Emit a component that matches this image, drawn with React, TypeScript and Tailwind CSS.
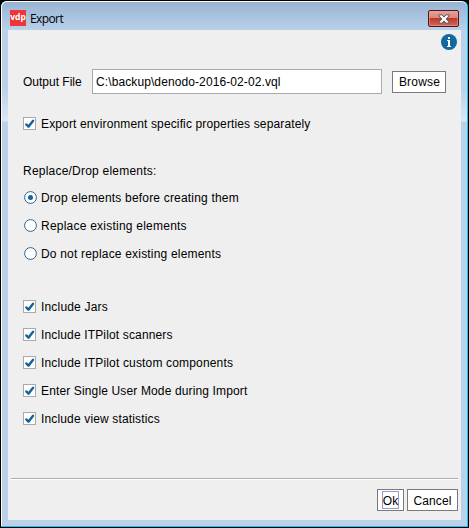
import React from 'react';

function Check({ label, spacing }: { label: string; spacing: string }) {
  return (
    <label className="flex h-7 items-center">
      <span className="flex h-[13px] w-[13px] shrink-0 items-center justify-center border border-[#aaaaaa] bg-white">
        <svg width="11" height="11" viewBox="0 0 11 11">
          <path d="M1.200 5.500H3.200L4.400 6.800 8.300 1.800H10.200V3.200L5.300 9.800H3.800L1.200 7Z" fill="#14649b" />
        </svg>
      </span>
      <span className={'mt-px ml-[5px] whitespace-nowrap ' + spacing}>{label}</span>
    </label>
  );
}

function Radio({ label, on, spacing }: { label: string; on?: boolean; spacing: string }) {
  return (
    <label className="flex h-7 items-center">
      <svg className="ml-px shrink-0" width="13" height="13" viewBox="0 0 13 13">
        <circle cx="6.5" cy="6.5" r="5.9" fill="#fff" stroke="#30648f" strokeWidth="1" />
        {on && <circle cx="6.5" cy="6.5" r="2.5" fill="#14649b" />}
      </svg>
      <span className={'mt-px ml-1 whitespace-nowrap ' + spacing}>{label}</span>
    </label>
  );
}

export default function App() {
  return (
    <div className="h-[528px] w-[469px] overflow-hidden bg-black font-['Liberation_Sans',Arial,sans-serif] text-[12px] leading-[14px] text-black">
      <div className="flex h-full flex-col rounded-t-[7px] border border-black bg-[#17c5ed] pr-px pb-px">
        <div className="flex min-h-0 flex-1 flex-col rounded-t-[6px] border-t border-l border-white bg-[linear-gradient(180deg,#99b4d2_0px,#a9c2df_14px,#b9d1ea_28px,#b9d1ea_85px,#dae7f5_119px,#b9d1ea_120px)] pr-[6px] pb-[6px] pl-[6px]">
          <header className="flex h-7 shrink-0 items-start">
            <span className="mt-2 ml-[2px] flex h-4 w-4 items-center justify-center bg-[#ee3537] pb-px font-['Open_Sans',sans-serif] text-[8.5px] leading-none font-bold text-white">vdp</span>
            <span className="mt-[9px] ml-[4px] font-['Open_Sans',sans-serif] text-[12px] leading-[16px] tracking-[-0.6px]">Export</span>
            <button className="mt-2 mr-[2px] ml-auto flex h-[17px] w-[31px] items-center justify-center rounded-[2px] border border-[#501622] bg-[linear-gradient(#e7a399_0%,#d88478_48%,#bd3a26_50%,#d46a55_100%)] shadow-[inset_0_0_0_1px_#e9a49a88]">
              <svg width="12" height="10" viewBox="0 0 12 10">
                <path d="M1 .8H4L6 3 8 .8H11V2L8.2 5 11 8V9.2H8L6 7 4 9.2H1V8L3.8 5 1 2Z" fill="#f5f5f5" stroke="#5b5863" strokeWidth="1" />
              </svg>
            </button>
          </header>
          <main className="flex min-h-0 flex-1 flex-col bg-[#efefef]">
            <div className="flex h-[39px] justify-end pt-1 pr-[4px]">
              <svg width="16" height="16" viewBox="0 0 16 16">
                <circle cx="8" cy="8" r="8" fill="#13689d" />
                <path d="M7 3h2v2H7zM6 6h3v6h1v1H6v-1h1V7H6z" fill="#fff" />
              </svg>
            </div>
            <div className="flex h-[25px] items-center pl-[15px]">
              <span className="w-[69px] whitespace-nowrap">Output File</span>
              <div className="flex h-[25px] w-[290px] items-center border border-[#aaaaaa] bg-white pl-[3px] tracking-[0.1px]">C:\backup\denodo-2016-02-02.vql</div>
              <button className="ml-[10px] h-[22px] w-[54px] border border-[#7a7a7a] bg-white pl-px tracking-[0.2px]">Browse</button>
            </div>
            <div className="mt-[15px] pl-[15px]">
              <Check label="Export environment specific properties separately" spacing="tracking-[0.135px]" />
            </div>
            <div className="mt-[27px] pl-[15px] tracking-[0.22px]">Replace/Drop elements:</div>
            <div className="mt-[5px] pl-[15px]">
              <Radio label="Drop elements before creating them" on spacing="tracking-[0.19px]" />
              <Radio label="Replace existing elements" spacing="tracking-[0.23px]" />
              <Radio label="Do not replace existing elements" spacing="tracking-[0.19px]" />
            </div>
            <div className="mt-[25px] pl-[15px]">
              <Check label="Include Jars" spacing="tracking-[0.18px]" />
              <Check label="Include ITPilot scanners" spacing="tracking-[0.15px]" />
              <Check label="Include ITPilot custom components" spacing="tracking-[0.16px]" />
              <Check label="Enter Single User Mode during Import" spacing="tracking-[0.14px]" />
              <Check label="Include view statistics" spacing="tracking-[0.15px]" />
            </div>
            <footer className="mx-[3px] mt-auto h-[42px] border-t border-[#adadad]">
              <div className="flex justify-end gap-[3px] border-t border-white pt-[9px]">
                <button className="flex h-[22px] w-[27px] items-center justify-center border border-[#7a7a7a] bg-white">
                  <span className="flex h-[18px] w-[17px] items-center justify-center border border-[#9999cc] pt-px">Ok</span>
                </button>
                <button className="h-[22px] w-[51px] border border-[#7a7a7a] bg-white pt-px tracking-[0.1px]">Cancel</button>
              </div>
            </footer>
          </main>
        </div>
      </div>
    </div>
  );
}
